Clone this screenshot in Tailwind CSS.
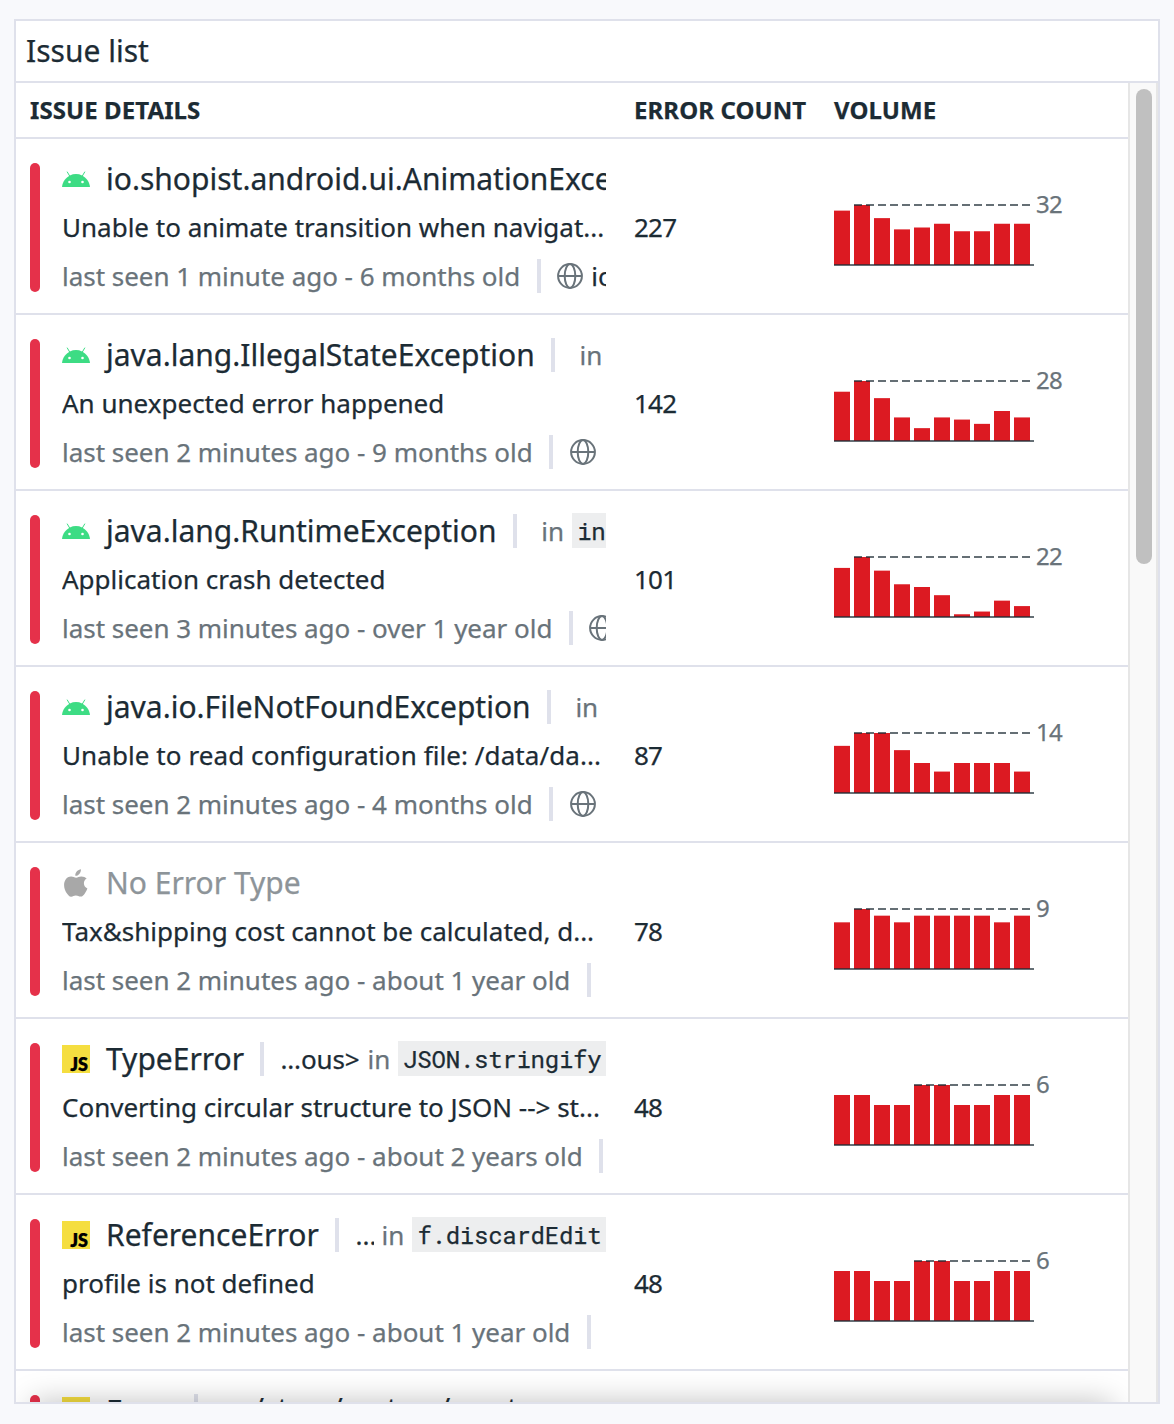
<!DOCTYPE html>
<html lang="en">
<head>
<meta charset="utf-8">
<title>Issue list</title>
<script src="https://cdn.jsdelivr.net/npm/@tailwindcss/browser@4"></script>
</head>
<body class="h-[1424px] overflow-hidden bg-[#f8f9fc] pt-[19px] pl-[14px] font-['Noto_Sans',sans-serif] text-[#1c2b34] [-webkit-text-stroke:0.25px]">
<svg class="hidden">
  <symbol id="android" viewBox="0 0 28 16">
    <path d="M5.3 1l2.6 4.400M22.700 1l-2.600 4.400" stroke="#3ddc84" stroke-width="1" stroke-linecap="round"/>
    <path d="M0 16C.6 10.500 3.700 6.600 7.900 4.400C11.700 2.600 16.300 2.600 20.100 4.400C24.300 6.600 27.400 10.500 28 16Z" fill="#3ddc84"/>
    <circle cx="7.500" cy="11" r="1.300" fill="#fff"/><circle cx="20.500" cy="11" r="1.300" fill="#fff"/>
  </symbol>
  <symbol id="apple" viewBox="0 0 24 28">
    <path d="M16.900 0.200c.2 1.800-.5 3.500-1.600 4.700-1.100 1.200-2.500 2-4 1.900-.2-1.700.6-3.400 1.600-4.500C14 1.100 15.700.3 16.900.2z" fill="#a8a8a8"/>
    <path d="M22.700 9.600c-1.700 1-2.800 2.600-2.800 4.700 0 2.400 1.400 4.300 3.500 5.200-.5 1.500-1.300 3-2.300 4.400-1.300 1.900-2.500 3.700-4.500 3.700-2 0-2.500-1.100-4.700-1.100-2.200 0-2.900 1.100-4.700 1.200-1.900.1-3.300-2-4.600-3.800C.1 20.400-1 14.600 1.500 10.700c1.300-2 3.400-3.200 5.600-3.200 2.100 0 3.400 1.200 5.100 1.200 1.600 0 2.700-1.200 5.200-1.200 2 0 4 .9 5.300 2.100z" fill="#a8a8a8"/>
  </symbol>
  <symbol id="globe" viewBox="0 0 26 26">
    <g fill="none" stroke="#69737a" stroke-width="2">
      <circle cx="13" cy="13" r="11.900"/><ellipse cx="13" cy="13" rx="5.300" ry="11.900"/><path d="M1 13h24"/>
    </g>
  </symbol>
</svg>
<main class="relative flex h-[1385px] w-[1146px] flex-col overflow-hidden border-2 border-[#dfe1eb] bg-white">
  <header class="flex h-[62px] shrink-0 items-center border-b-2 border-[#dfe1eb] pb-[2px] pl-[10px] text-[30px]">Issue list</header>
  <div class="flex min-h-0 flex-1">
    <section class="relative w-[1112px] overflow-hidden">
      <div class="flex h-14 items-center border-b-2 border-[#dfe1eb] pl-[14px] text-[24px] font-bold tracking-[0.08px]">
        <span class="w-[604px]">ISSUE DETAILS</span><span class="w-[200px]">ERROR COUNT</span><span>VOLUME</span>
      </div>
      <div id="rows"></div>
      <div class="absolute -bottom-10 left-4 right-4 h-10 shadow-[0_0_30px_rgba(0,0,0,0.25)]"></div>
    </section>
    <aside class="w-[30px] border-x-2 border-[#e6e6e6] bg-[#f9f9f9] pt-[6px] pl-[6px]">
      <div class="h-[475px] w-4 rounded-full bg-[#c0c0c0]"></div>
    </aside>
  </div>
</main>
<script>
const sep = '<i class="ml-[16.3px] h-[34px] w-1 shrink-0 bg-[#dfe1eb]"></i>';
const chip = (t) => `<code class="ml-[8px] h-[35px] shrink-0 bg-[#edeeef] pr-[5px] pl-[5px] font-['Roboto_Mono','DejaVu_Sans_Mono',monospace] text-[24px] leading-[37px] tracking-[-0.25px]">${t}</code>`;
const inn = (cls) => `<span class="${cls} shrink-0 pt-[2px] text-[26px] text-[#69737a]">in</span>`;
const globe = '<svg class="ml-[16.7px] h-[26px] w-[26px] shrink-0"><use href="#globe"/></svg>';
const icons = {
  android: '<svg class="h-4 w-7 shrink-0"><use href="#android"/></svg>',
  apple: '<svg class="h-7 w-7 shrink-0 pr-[2px] pl-[2px]"><use href="#apple"/></svg>',
  js: '<span class="flex h-7 w-7 shrink-0 items-end justify-end bg-[#f5de40] pr-[2px] font-[Lato,sans-serif] text-[18px] leading-[18px] font-extrabold text-black">JS</span>',
};
const rows = [
  ['android', 'io.shopist.android.ui.AnimationException', '', 'Unable to animate transition when navigat...', '1 minute ago - 6 months old', sep + globe + '<span class="ml-2 shrink-0">ios</span>', 227, 32, [29,32,25,19,20,22,18,18,22,22]],
  ['android', 'java.lang.IllegalStateException', sep + inn('ml-[24.5px]'), 'An unexpected error happened', '2 minutes ago - 9 months old', sep + globe, 142, 28, [23,28,20,11,6,11,10,8,14,11]],
  ['android', 'java.lang.RuntimeException', sep + inn('ml-[24.5px]') + chip('init'), 'Application crash detected', '3 minutes ago - over 1 year old', sep + globe, 101, 22, [18,22,17,12,11,8,1,2,6,4]],
  ['android', 'java.io.FileNotFoundException', sep + inn('ml-[24.5px]'), '<span class="tracking-[0.08px]">Unable to read configuration file: /data/da...</span>', '2 minutes ago - 4 months old', sep + globe, 87, 14, [11,14,14,10,7,5,7,7,7,5]],
  ['apple', '<span class="text-[#8d9499]">No Error Type</span>', '', 'Tax&amp;shipping cost cannot be calculated, d...', '2 minutes ago - about 1 year old', sep, 78, 9, [7,9,8,7,8,8,8,8,7,8]],
  ['js', 'TypeError', sep + '<span class="ml-[16px] shrink-0 pt-[2px] text-[26px] tracking-[-0.15px]">...ous&gt;</span>' + inn('ml-[8px]') + chip('JSON.stringify'), 'Converting circular structure to JSON --&gt; st...', '2 minutes ago - about 2 years old', sep, 48, 6, [5,5,4,4,6,6,4,4,5,5]],
  ['js', 'ReferenceError', sep + '<span class="ml-[16.5px] w-[18px] shrink-0 overflow-hidden pt-[2px] text-[26px]">...</span>' + inn('ml-[8px]') + chip('f.discardEdit'), 'profile is not defined', '2 minutes ago - about 1 year old', sep, 48, 6, [5,5,4,4,6,6,4,4,5,5]],
  ['js', 'Error', sep + '<span class="mb-[7px] ml-[19px] shrink-0 text-[28px] tracking-[0.2px]">...s/store/vectors/react</span>', '', '', '', '', 6, []],
];
const chart = (max, v) => v.length ? `<svg class="h-16 w-[200px]" viewBox="0 0 200 64">
  ${v.map((n, i) => `<rect x="${i * 20}" y="${62 - n / max * 60}" width="16" height="${n / max * 60}" fill="#dc1a22"/>`).join('')}
  <path d="M${v.indexOf(max) * 20} 2H196" stroke="#1c2b34" stroke-opacity=".68" stroke-width="2" stroke-dasharray="8 4"/>
  <path d="M0 62H200" stroke="#1c2b34" stroke-opacity=".68" stroke-width="2"/></svg>
  <span class="-mt-[15px] ml-[2px] text-[24px] leading-8 tracking-[-0.8px] text-[#69737a]">${max}</span>` : '';
document.getElementById('rows').innerHTML = rows.map(([ic, title, extra, desc, seen, tail, count, max, v]) => `
<article class="flex h-44 border-b-2 border-[#dfe1eb] pl-[14px] whitespace-nowrap">
  <div class="mt-6 h-[129px] w-[10px] shrink-0 rounded-[5px] bg-[#e5314a]"></div>
  <div class="ml-[22px] w-[544px] shrink-0 overflow-hidden pt-[22px]">
    <div class="flex h-[35px] items-center">${icons[ic]}<span class="ml-4 shrink-0 text-[30px]">${title}</span>${extra}</div>
    <div class="mt-[14px] h-[34px] text-[26px] leading-[34px]">${desc}</div>
    <div class="mt-[15px] flex h-[34px] items-center text-[26px]"><span class="shrink-0 tracking-[-0.025px] text-[#69737a]">last seen ${seen}</span>${tail}</div>
  </div>
  <div class="ml-7 w-[200px] shrink-0 pt-[71px] text-[26px] leading-[34px] tracking-[-0.8px]">${count}</div>
  <div class="flex items-start pt-16">${chart(max, v)}</div>
</article>`).join('');
</script>
</body>
</html>
